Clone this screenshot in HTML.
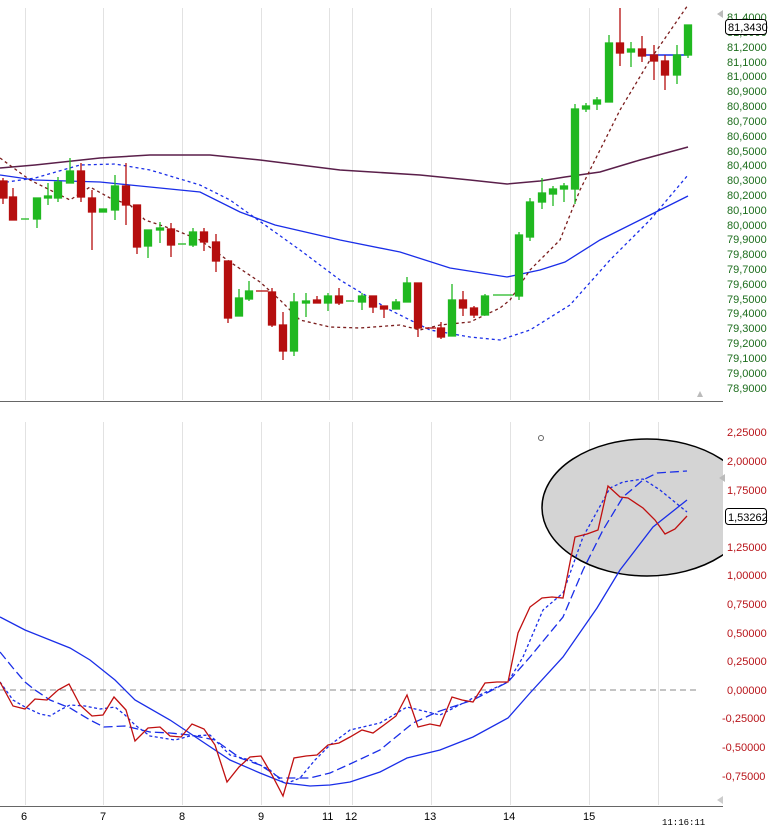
<!DOCTYPE html>
<html><head><meta charset="utf-8"><style>
html,body{margin:0;padding:0;background:#fff;width:770px;height:832px;overflow:hidden}
svg{display:block}
text{font-family:"Liberation Sans",sans-serif;font-size:11px}
</style></head><body>
<svg width="770" height="832" viewBox="0 0 770 832" xmlns="http://www.w3.org/2000/svg">
<g stroke="#e2e2e2" stroke-width="1">
<line x1="25.5" y1="8" x2="25.5" y2="400"/><line x1="103.5" y1="8" x2="103.5" y2="400"/><line x1="182.5" y1="8" x2="182.5" y2="400"/><line x1="261.5" y1="8" x2="261.5" y2="400"/><line x1="329.5" y1="8" x2="329.5" y2="400"/><line x1="352.5" y1="8" x2="352.5" y2="400"/><line x1="431.5" y1="8" x2="431.5" y2="400"/><line x1="510.5" y1="8" x2="510.5" y2="400"/><line x1="589.5" y1="8" x2="589.5" y2="400"/><line x1="658.5" y1="8" x2="658.5" y2="400"/>
<line x1="25.5" y1="422" x2="25.5" y2="805"/><line x1="103.5" y1="422" x2="103.5" y2="805"/><line x1="182.5" y1="422" x2="182.5" y2="805"/><line x1="261.5" y1="422" x2="261.5" y2="805"/><line x1="329.5" y1="422" x2="329.5" y2="805"/><line x1="352.5" y1="422" x2="352.5" y2="805"/><line x1="431.5" y1="422" x2="431.5" y2="805"/><line x1="510.5" y1="422" x2="510.5" y2="805"/><line x1="589.5" y1="422" x2="589.5" y2="805"/><line x1="658.5" y1="422" x2="658.5" y2="805"/>
</g>
<line x1="0" y1="401.5" x2="723" y2="401.5" stroke="#666"/>
<line x1="0" y1="806.5" x2="723" y2="806.5" stroke="#666"/>

<!-- top panel lines -->
<polyline fill="none" stroke="#5a1f4a" stroke-width="1.5" points="0,168 35,165 100,158 150,155 210,155 260,160 340,170 420,175 470,180 507,184 540,181 565,177 600,172 640,160 688,147"/>
<polyline fill="none" stroke="#1a2ee8" stroke-width="1.3" points="0,175 35,180 100,182 130,185 200,192 240,212 275,225 340,240 400,252 450,268 507,277 540,270 565,262 600,240 640,220 688,196"/>
<polyline fill="none" stroke="#1a2ee8" stroke-width="1.3" stroke-dasharray="3,3" points="0,183 35,178 80,165 115,164 150,170 200,185 230,200 265,225 300,250 340,280 390,310 430,330 470,337 500,340 530,330 570,305 610,260 650,220 688,175"/>
<polyline fill="none" stroke="#7a1c1c" stroke-width="1.3" stroke-dasharray="3,3" points="0,158 30,180 70,200 90,187 110,198 130,205 145,220 175,230 200,240 230,262 260,282 280,300 300,320 330,327 360,328 400,325 420,330 440,325 470,322 500,308 510,300 530,270 560,240 580,190 600,150 620,110 650,60 688,5"/>
<line x1="643" y1="55" x2="688" y2="55" stroke="#1a2ee8" stroke-width="1.5"/>

<g stroke="#b50e0e" fill="#b50e0e" stroke-width="1.3">
<line x1="3" y1="178" x2="3" y2="204"/><rect x="-1" y="181" width="8" height="17"/>
<line x1="13" y1="188" x2="13" y2="220"/><rect x="9.5" y="197" width="7" height="23"/>
<line x1="81" y1="163" x2="81" y2="202"/><rect x="77.5" y="171" width="7" height="26"/>
<line x1="92" y1="190" x2="92" y2="250"/><rect x="88.5" y="198" width="7" height="14"/>
<line x1="126" y1="163" x2="126" y2="225"/><rect x="122.5" y="186" width="7" height="19"/>
<line x1="137" y1="205" x2="137" y2="254"/><rect x="133.5" y="205" width="7" height="42"/>
<line x1="171" y1="223" x2="171" y2="257"/><rect x="167.5" y="229" width="7" height="16"/>
<line x1="204" y1="228" x2="204" y2="251"/><rect x="200.5" y="232" width="7" height="10"/>
<line x1="216" y1="234" x2="216" y2="272"/><rect x="212.5" y="242" width="7" height="19"/>
<line x1="228" y1="261" x2="228" y2="323"/><rect x="224.5" y="261" width="7" height="57"/>
<line x1="256" y1="291" x2="268" y2="291"/>
<line x1="272" y1="288" x2="272" y2="327"/><rect x="268.5" y="292" width="7" height="33"/>
<line x1="283" y1="312" x2="283" y2="360"/><rect x="279.5" y="325" width="7" height="26"/>
<line x1="317" y1="296" x2="317" y2="303"/><rect x="313.5" y="300" width="7" height="3"/>
<line x1="339" y1="288" x2="339" y2="305"/><rect x="335.5" y="296" width="7" height="7"/>
<line x1="373" y1="296" x2="373" y2="313"/><rect x="369.5" y="296" width="7" height="11"/>
<line x1="384" y1="306" x2="384" y2="318"/><rect x="380.5" y="306" width="7" height="3"/>
<line x1="418" y1="283" x2="418" y2="337"/><rect x="414.5" y="283" width="7" height="45"/>
<line x1="425" y1="328" x2="436" y2="328"/>
<line x1="441" y1="322" x2="441" y2="339"/><rect x="437.5" y="328" width="7" height="9"/>
<line x1="463" y1="291" x2="463" y2="316"/><rect x="459.5" y="300" width="7" height="8"/>
<line x1="474" y1="306" x2="474" y2="318"/><rect x="470.5" y="308" width="7" height="7"/>
<line x1="620" y1="8" x2="620" y2="66"/><rect x="616.5" y="43" width="7" height="10"/>
<line x1="642" y1="36" x2="642" y2="62"/><rect x="638.5" y="49" width="7" height="7"/>
<line x1="654" y1="45" x2="654" y2="80"/><rect x="650.5" y="55" width="7" height="6"/>
<line x1="665" y1="55" x2="665" y2="90"/><rect x="661.5" y="61" width="7" height="14"/>
</g>
<g stroke="#20b820" fill="#20b820" stroke-width="1.3">
<line x1="21" y1="219" x2="29" y2="219"/>
<line x1="37" y1="198" x2="37" y2="228"/><rect x="33.5" y="198" width="7" height="21"/>
<line x1="48" y1="183" x2="48" y2="205"/><rect x="44.5" y="196" width="7" height="2"/>
<line x1="58" y1="177" x2="58" y2="202"/><rect x="54.5" y="182" width="7" height="16"/>
<line x1="70" y1="158" x2="70" y2="183"/><rect x="66.5" y="171" width="7" height="12"/>
<rect x="99.5" y="209" width="7" height="3"/>
<line x1="115" y1="175" x2="115" y2="220"/><rect x="111.5" y="186" width="7" height="24"/>
<line x1="148" y1="230" x2="148" y2="258"/><rect x="144.5" y="230" width="7" height="16"/>
<line x1="160" y1="222" x2="160" y2="243"/><rect x="156.5" y="228" width="7" height="2"/>
<line x1="178" y1="244" x2="186" y2="244"/>
<line x1="193" y1="228" x2="193" y2="247"/><rect x="189.5" y="232" width="7" height="13"/>
<line x1="239" y1="289" x2="239" y2="316"/><rect x="235.5" y="298" width="7" height="18"/>
<line x1="249" y1="281" x2="249" y2="301"/><rect x="245.5" y="291" width="7" height="8"/>
<line x1="294" y1="293" x2="294" y2="356"/><rect x="290.5" y="302" width="7" height="49"/>
<line x1="306" y1="293" x2="306" y2="317"/><rect x="302.5" y="301" width="7" height="2"/>
<line x1="328" y1="293" x2="328" y2="311"/><rect x="324.5" y="296" width="7" height="7"/>
<line x1="346" y1="301" x2="354" y2="301"/>
<line x1="362" y1="293" x2="362" y2="310"/><rect x="358.5" y="296" width="7" height="6"/>
<line x1="396" y1="299" x2="396" y2="309"/><rect x="392.5" y="302" width="7" height="7"/>
<line x1="407" y1="277" x2="407" y2="302"/><rect x="403.5" y="283" width="7" height="19"/>
<line x1="452" y1="284" x2="452" y2="336"/><rect x="448.5" y="300" width="7" height="36"/>
<line x1="485" y1="294" x2="485" y2="315"/><rect x="481.5" y="296" width="7" height="19"/>
<line x1="493" y1="295" x2="513" y2="295"/>
<line x1="519" y1="232" x2="519" y2="300"/><rect x="515.5" y="235" width="7" height="61"/>
<line x1="530" y1="198" x2="530" y2="241"/><rect x="526.5" y="202" width="7" height="35"/>
<line x1="542" y1="178" x2="542" y2="209"/><rect x="538.5" y="193" width="7" height="9"/>
<line x1="553" y1="186" x2="553" y2="206"/><rect x="549.5" y="189" width="7" height="5"/>
<line x1="564" y1="183" x2="564" y2="202"/><rect x="560.5" y="186" width="7" height="3"/>
<line x1="575" y1="104" x2="575" y2="204"/><rect x="571.5" y="109" width="7" height="80"/>
<line x1="586" y1="103" x2="586" y2="112"/><rect x="582.5" y="106" width="7" height="3"/>
<line x1="597" y1="97" x2="597" y2="110"/><rect x="593.5" y="100" width="7" height="4"/>
<line x1="609" y1="35" x2="609" y2="102"/><rect x="605.5" y="43" width="7" height="59"/>
<line x1="631" y1="42" x2="631" y2="67"/><rect x="627.5" y="49" width="7" height="3"/>
<line x1="677" y1="45" x2="677" y2="84"/><rect x="673.5" y="55" width="7" height="20"/>
<line x1="688" y1="25" x2="688" y2="58"/><rect x="684.5" y="25" width="7" height="30"/>
</g>

<!-- top axis labels -->
<g fill="#1e6e1e">
<text x="727" y="21">81,4000</text><text x="727" y="36">81,3000</text><text x="727" y="51">81,2000</text><text x="727" y="66">81,1000</text><text x="727" y="80">81,0000</text><text x="727" y="95">80,9000</text><text x="727" y="110">80,8000</text><text x="727" y="125">80,7000</text><text x="727" y="140">80,6000</text><text x="727" y="155">80,5000</text><text x="727" y="169">80,4000</text><text x="727" y="184">80,3000</text><text x="727" y="199">80,2000</text><text x="727" y="214">80,1000</text><text x="727" y="229">80,0000</text><text x="727" y="243">79,9000</text><text x="727" y="258">79,8000</text><text x="727" y="273">79,7000</text><text x="727" y="288">79,6000</text><text x="727" y="303">79,5000</text><text x="727" y="317">79,4000</text><text x="727" y="332">79,3000</text><text x="727" y="347">79,2000</text><text x="727" y="362">79,1000</text><text x="727" y="377">79,0000</text><text x="727" y="392">78,9000</text>
</g>
<rect x="725.5" y="19.5" width="41" height="15" rx="3" fill="#fff" stroke="#000"/>
<text x="728" y="31" fill="#000">81,3430</text>
<polygon points="717,14 723,10 723,18" fill="#bbb"/>
<polygon points="697,397 700,391 703,397" fill="#bbb"/>

<!-- bottom panel -->
<line x1="0" y1="690" x2="700" y2="690" stroke="#888" stroke-dasharray="6,4"/>
<circle cx="541" cy="438" r="2.5" fill="none" stroke="#666"/>
<svg x="0" y="0" width="723" height="832" overflow="hidden">
<ellipse cx="647" cy="507.5" rx="105" ry="68.5" fill="#d4d4d4" stroke="#000" stroke-width="1.5"/>
</svg>
<polyline fill="none" stroke="#1a2ee8" stroke-width="1.3" points="0,617 25,630 50,640 70,648 90,660 105,672 115,680 135,700 170,720 200,740 230,760 260,773 285,783 310,786 330,785 350,782 380,772 407,758 440,750 473,737 508,718 530,693 563,657 597,608 620,570 653,527 687,500"/>
<polyline fill="none" stroke="#1a2ee8" stroke-width="1.3" stroke-dasharray="9,4" points="0,652 13,668 25,682 35,690 50,700 70,708 90,720 104,727 125,726 150,732 170,733 190,735 215,740 240,758 260,765 280,778 310,778 330,773 350,764 380,750 413,723 437,712 473,700 508,682 530,657 563,617 583,570 603,530 623,497 643,480 657,473 687,471"/>
<polyline fill="none" stroke="#1a2ee8" stroke-width="1.3" stroke-dasharray="3,2.5" points="0,682 13,700 25,707 40,714 50,716 60,710 70,705 85,706 100,709 115,707 125,715 135,725 150,736 175,740 190,736 210,735 230,755 250,760 270,770 285,784 300,778 315,760 330,745 350,730 380,723 407,707 440,715 473,698 508,682 523,657 543,610 563,593 583,537 610,488 623,482 643,479 660,490 687,512"/>
<polyline fill="none" stroke="#c01010" stroke-width="1.3" points="0,682 13,706 25,709 35,699 47,700 58,690 69,684 80,705 92,716 103,715 114,697 126,710 135,741 148,728 160,727 170,736 181,737 192,724 204,729 215,745 227,782 239,767 250,757 261,756 272,775 283,796 294,758 306,756 317,755 328,745 339,743 350,737 362,730 373,733 384,725 396,716 407,695 418,727 430,724 440,726 452,697 462,700 473,702 485,683 497,682 508,682 518,633 530,607 542,598 552,597 563,598 575,537 587,534 598,530 608,486 620,497 628,498 643,508 655,520 665,534 675,529 687,516"/>

<g fill="#b8141a">
<text x="727" y="436">2,25000</text><text x="727" y="465">2,00000</text><text x="727" y="494">1,75000</text><text x="727" y="551">1,25000</text><text x="727" y="579">1,00000</text><text x="727" y="608">0,75000</text><text x="727" y="637">0,50000</text><text x="727" y="665">0,25000</text><text x="727" y="694">0,00000</text><text x="722" y="722">-0,25000</text><text x="722" y="751">-0,50000</text><text x="722" y="780">-0,75000</text>
</g>
<rect x="725.5" y="508.5" width="41" height="16" rx="3" fill="#fff" stroke="#000"/>
<text x="728" y="521" fill="#000">1,53262</text>
<polygon points="719,478 725,474 725,482" fill="#bbb"/>
<polygon points="717,800 723,796 723,804" fill="#ccc"/>

<g fill="#000">
<text x="21" y="820">6</text><text x="100" y="820">7</text><text x="179" y="820">8</text><text x="258" y="820">9</text><text x="322" y="820">11</text><text x="345" y="820">12</text><text x="424" y="820">13</text><text x="503" y="820">14</text><text x="583" y="820">15</text>
<text x="662" y="825" style="font-family:'Liberation Mono',monospace;font-size:9px">11:16:11</text>
</g>
</svg>
</body></html>
